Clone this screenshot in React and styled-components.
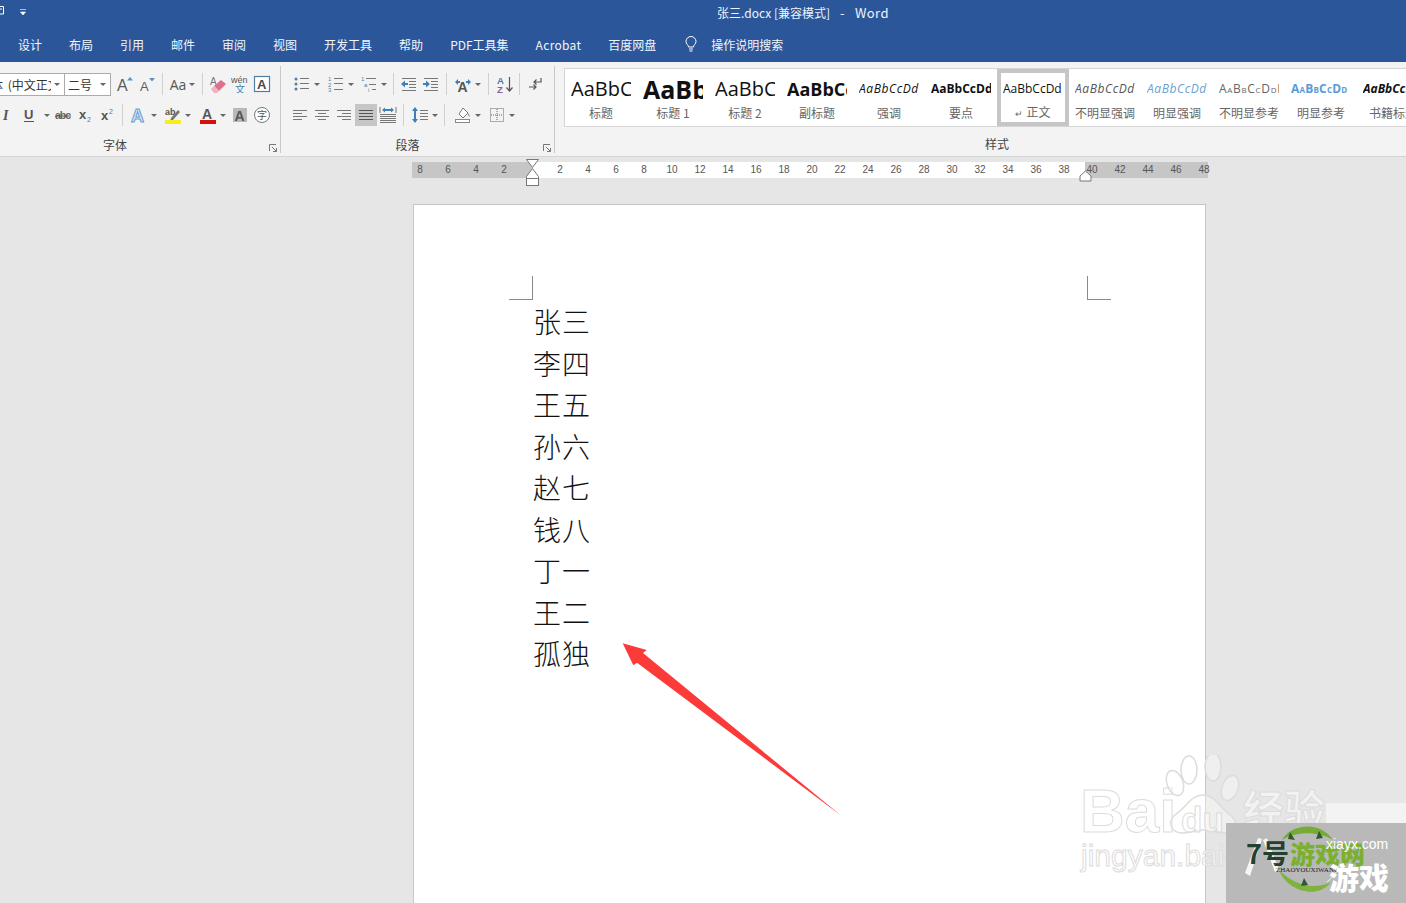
import React from 'react';
import styled, { createGlobalStyle } from 'styled-components';

const CJK = '"Noto Sans CJK SC", sans-serif';
const UI = '"Open Sans", "Noto Sans CJK SC", sans-serif';

const GlobalStyle = createGlobalStyle`
  html, body { margin: 0; padding: 0; background: #e6e6e6; }
  body { font-family: ${CJK}; font-size: 12px; color: #444; }
`;

const NAMES = ['张三', '李四', '王五', '孙六', '赵七', '钱八', '丁一', '王二', '孤独'];
const TABS = ['设计', '布局', '引用', '邮件', '审阅', '视图', '开发工具', '帮助', 'PDF工具集', 'Acrobat', '百度网盘'];
const RULER = [8, 6, 4, 2, ''].concat(Array.from({ length: 24 }, (_, i) => (i + 1) * 2));

const STYLES = [
  { name: '标题', sample: 'AaBbCcDd', size: 20 },
  { name: '标题 1', sample: 'AaBbCcDd', size: 25, bold: true },
  { name: '标题 2', sample: 'AaBbCcDd', size: 20 },
  { name: '副标题', sample: 'AaBbCcDd', size: 18, bold: true },
  { name: '强调', sample: 'AaBbCcDd', italic: true, track: 0.6 },
  { name: '要点', sample: 'AaBbCcDd', bold: true },
  { name: '正文', sample: 'AaBbCcDd', active: true },
  { name: '不明显强调', sample: 'AaBbCcDd', italic: true, color: '#555', track: 0.6 },
  { name: '明显强调', sample: 'AaBbCcDd', italic: true, color: '#6a9fd0', track: 0.6 },
  { name: '不明显参考', sample: 'AaBbCcDdEe', caps: true, color: '#666', track: 0.7 },
  { name: '明显参考', sample: 'AaBbCcDd', caps: true, bold: true, color: '#5b9bd5', track: 0.2 },
  { name: '书籍标题', sample: 'AaBbCcDd', italic: true, bold: true },
];

const Icon = ({ w = 18, h = 18, children }) => (
  <svg width={w} height={h} viewBox={`0 0 ${w} ${h}`} fontFamily="Liberation Sans, sans-serif">
    {children}
  </svg>
);

const Lines = ({ rows, stroke = '#777' }) => (
  <g stroke={stroke} strokeWidth="1" fill="none">
    {rows.map(([x1, x2, y]) => <path key={`${x1}-${y}`} d={`M${x1} ${y}.5H${x2}`} />)}
  </g>
);

const icons = {
  grow: (
    <Icon>
      <text x="1" y="16" fontSize="16" fill="#5c5c5c">A</text>
      <path d="M11 5.500l3-3.500 3 3.500z" fill="#5f93bd" />
    </Icon>
  ),
  shrink: (
    <Icon>
      <text x="2" y="16" fontSize="13" fill="#5c5c5c">A</text>
      <path d="M11 3h6l-3 3.500z" fill="#5f93bd" />
    </Icon>
  ),
  eraser: (
    <Icon>
      <text x="1" y="10" fontSize="10" fill="#777">A</text>
      <path d="M5 11l7-6 5 4-7 7z" fill="#e0708c" />
      <path d="M2 14l3-3 5 5-2 2H5z" fill="#f3b0c0" />
    </Icon>
  ),
  wen: (
    <Icon>
      <text x="0" y="8" fontSize="9" fill="#555">wén</text>
      <text x="4" y="17.500" fontSize="10" fill="#3f7fb5" fontFamily="Noto Sans CJK SC">文</text>
    </Icon>
  ),
  boxA: (
    <Icon>
      <rect x="1.500" y="1.500" width="15" height="15" fill="#fff" stroke="#4f7fa6" strokeWidth="1.200" />
      <text x="4" y="14" fontSize="13" fontWeight="700" fill="#4a4a4a">A</text>
    </Icon>
  ),
  italic: <Icon><text x="6" y="14" fontSize="14" fontWeight="700" fontStyle="italic" fill="#555" fontFamily="Liberation Serif">I</text></Icon>,
  underline: (
    <Icon>
      <text x="4" y="13" fontSize="13" fontWeight="700" fill="#555">U</text>
      <path d="M4 15.500h10" stroke="#555" />
    </Icon>
  ),
  strike: (
    <Icon>
      <text x="1" y="13" fontSize="10.500" fontWeight="700" fill="#666" textLength="16">abc</text>
      <path d="M1 10h16" stroke="#555" />
    </Icon>
  ),
  sub: (
    <Icon>
      <text x="3" y="13" fontSize="13" fontWeight="700" fill="#555">x</text>
      <text x="11" y="16" fontSize="7" fill="#4f7fa6">2</text>
    </Icon>
  ),
  sup: (
    <Icon>
      <text x="3" y="14" fontSize="13" fontWeight="700" fill="#555">x</text>
      <text x="11" y="8" fontSize="7" fill="#4f7fa6">2</text>
    </Icon>
  ),
  effect: <Icon><text x="1" y="16" fontSize="18" fontWeight="700" fill="#d6e6f3" stroke="#6a9fd0" strokeWidth="1">A</text></Icon>,
  highlight: (
    <Icon>
      <text x="1" y="9" fontSize="9" fontWeight="700" fill="#555">ab</text>
      <path d="M7 12l7-8 2 2-7 8-3 1z" fill="#777" />
      <rect x="1" y="14" width="16" height="4" fill="#f7ee1e" />
    </Icon>
  ),
  color: (
    <Icon>
      <text x="3" y="12.500" fontSize="14" fontWeight="700" fill="#555">A</text>
      <rect x="1" y="14" width="16" height="4" fill="#d80f0f" />
    </Icon>
  ),
  shaded: (
    <Icon>
      <rect x="2" y="2" width="14" height="14" fill="#b9b9b9" />
      <text x="3.500" y="14.500" fontSize="14" fontWeight="700" fill="#555">A</text>
    </Icon>
  ),
  circled: (
    <Icon>
      <circle cx="9" cy="9" r="7.500" fill="#fff" stroke="#777" />
      <text x="4" y="13" fontSize="10" fill="#555" fontFamily="Noto Sans CJK SC">字</text>
    </Icon>
  ),
  bullets: (
    <Icon>
      <g fill="#4f7fa6"><circle cx="3" cy="4" r="1.500" /><circle cx="3" cy="9" r="1.500" /><circle cx="3" cy="14" r="1.500" /></g>
      <Lines rows={[[7, 16, 3], [7, 16, 8], [7, 16, 13]]} />
    </Icon>
  ),
  numbers: (
    <Icon>
      <g fontSize="6" fill="#4f7fa6"><text x="1" y="6">1</text><text x="1" y="11.500">2</text><text x="1" y="17">3</text></g>
      <Lines rows={[[7, 16, 3], [7, 16, 8], [7, 16, 14]]} />
    </Icon>
  ),
  multi: (
    <Icon>
      <g fontSize="6" fill="#4f7fa6"><text x="1" y="6">1</text><text x="4" y="11.500">a</text><text x="8" y="17">i</text></g>
      <Lines rows={[[6, 16, 3], [9, 16, 9], [12, 16, 14]]} />
    </Icon>
  ),
  outdent: (
    <Icon>
      <path d="M1 9l4-3.500V8h3v2H5v2.500z" fill="#3f7fb5" />
      <Lines rows={[[2, 16, 3], [9, 16, 6], [9, 16, 9], [9, 16, 12], [2, 16, 15]]} />
    </Icon>
  ),
  indent: (
    <Icon>
      <path d="M8 9L4 5.500V8H1v2h3v2.500z" fill="#3f7fb5" />
      <Lines rows={[[2, 16, 3], [9, 16, 6], [9, 16, 9], [9, 16, 12], [2, 16, 15]]} />
    </Icon>
  ),
  hanzi: (
    <Icon>
      <text x="3.500" y="17" fontSize="14" fontWeight="700" fill="#555">A</text>
      <path d="M1 7l3-3v2h2v2H4v2zM17 7l-3-3v2h-2v2h2v2z" fill="#3f7fb5" />
    </Icon>
  ),
  sort: (
    <Icon>
      <text x="2" y="8.500" fontSize="9.500" fontWeight="700" fill="#3f7fb5">A</text>
      <text x="2" y="17.500" fontSize="9.500" fontWeight="700" fill="#8a5fa8">Z</text>
      <path d="M14.500 2v14M11.500 12.500l3 3.500 3-3.500" stroke="#555" strokeWidth="1.200" fill="none" />
    </Icon>
  ),
  pilcrow: (
    <Icon>
      <path d="M15 3v4H8M10.500 4.500L8 7l2.500 2.500" stroke="#555" strokeWidth="1.200" fill="none" />
      <path d="M3 12h7M7.500 9.500L10 12l-2.500 2.500" stroke="#555" strokeWidth="1.200" fill="none" />
    </Icon>
  ),
  left: <Icon><Lines rows={[[2, 16, 4], [2, 11, 7], [2, 16, 10], [2, 11, 13]]} /></Icon>,
  center: <Icon><Lines rows={[[2, 16, 4], [5, 13, 7], [2, 16, 10], [5, 13, 13]]} /></Icon>,
  right: <Icon><Lines rows={[[2, 16, 4], [7, 16, 7], [2, 16, 10], [7, 16, 13]]} /></Icon>,
  justify: <Icon><Lines stroke="#555" rows={[[2, 16, 4], [2, 16, 7], [2, 16, 10], [2, 16, 13]]} /></Icon>,
  distribute: (
    <Icon>
      <path d="M1 1v6M17 1v6" stroke="#777" fill="none" />
      <path d="M3 4l3-2.500V3h6V1.500L15 4l-3 2.500V5H6v1.500z" fill="#3f7fb5" />
      <Lines rows={[[1, 17, 8], [1, 17, 10], [1, 17, 12], [1, 17, 14], [1, 17, 16]]} />
    </Icon>
  ),
  spacing: (
    <Icon>
      <path d="M4 1l3 4H5v8h2l-3 4-3-4h2V5H1z" fill="#3f7fb5" />
      <Lines rows={[[9, 17, 4], [9, 17, 7], [9, 17, 10], [9, 17, 13]]} />
    </Icon>
  ),
  bucket: (
    <Icon>
      <path d="M5 8l4-6 5 5-5 5z" fill="#fff" stroke="#777" />
      <path d="M14 7c1 1 2 3 1.500 4-.5-.5-1.500-2-1.500-4z" fill="#3f7fb5" />
      <rect x="1.500" y="13.500" width="14" height="3" fill="#fff" stroke="#888" />
    </Icon>
  ),
  borders: (
    <Icon>
      <rect x="2.500" y="2.500" width="13" height="13" fill="none" stroke="#666" strokeDasharray="1 1" />
      <path d="M9 3v12M3 9h12" stroke="#666" strokeDasharray="1 1" />
    </Icon>
  ),
};

const FONT_ROW_TWO = [
  { icon: 'underline', w: 35, caret: true, gap: 6 },
  { icon: 'strike', w: 22 },
  { icon: 'sub', w: 22 },
  { icon: 'sup', w: 22 },
];

const DialogLauncher = () => (
  <Launcher width="8" height="8" viewBox="0 0 8 8">
    <path d="M.5 7V.5H7M3 3l4.500 4.500M7.500 4v3.500H4" stroke="#777" fill="none" />
  </Launcher>
);

const App = () => (
  <Screen>
    <GlobalStyle />
    <TitleBar>
      <QuickAccess>
        <svg width="26" height="16" viewBox="0 0 26 16">
          <path d="M-3 2.500H3.500V10H-3M0 5h2" stroke="#fff" fill="none" />
          <path d="M20 5.500h6M20.500 8h5l-2.500 3z" stroke="#fff" fill="#fff" strokeWidth=".6" />
        </svg>
      </QuickAccess>
      <Title>张三.docx [兼容模式]<TitleApp>-</TitleApp><TitleApp>Word</TitleApp></Title>
    </TitleBar>
    <TabRow>
      {TABS.map((tab) => <Tab key={tab} $track={tab === 'Acrobat' ? 0.3 : 0}>{tab}</Tab>)}
      <SearchBox>
        <svg width="14" height="16" viewBox="0 0 14 16">
          <path d="M4.500 11c0-2-2.500-3-2.500-5.500a5 5 0 0 1 10 0C12 8 9.500 9 9.500 11zM5 13h4M5.500 15h3" stroke="#fff" fill="none" />
        </svg>
        <Tab>操作说明搜索</Tab>
      </SearchBox>
    </TabRow>

    <Ribbon>
      <Group $w={281}>
        <Rows>
          <Row>
            <FontBox>
              <FontName>宋体 (中文正文)</FontName>
              <Caret />
            </FontBox>
            <SizeBox>
              <FontName>二号</FontName>
              <Caret />
            </SizeBox>
            <Tool $w={22} $ml={3}>{icons.grow}</Tool>
            <Tool $w={22}>{icons.shrink}</Tool>
            <Sep />
            <Tool $w={31}><AaLabel>Aa</AaLabel><Caret /></Tool>
            <Sep />
            <Tool $w={22}>{icons.eraser}</Tool>
            <Tool $w={22}>{icons.wen}</Tool>
            <Tool $w={22}>{icons.boxA}</Tool>
          </Row>
          <Row>
            <Tool $w={22} $ml={-5}>{icons.italic}</Tool>
            {FONT_ROW_TWO.map((t) => (
              <Tool key={t.icon} $w={t.w} $gap={t.gap}>{icons[t.icon]}{t.caret && <Caret />}</Tool>
            ))}
            <Sep />
            <Tool $w={33}>{icons.effect}<Caret /></Tool>
            <Tool $w={35}>{icons.highlight}<Caret /></Tool>
            <Tool $w={34}>{icons.color}<Caret /></Tool>
            <Tool $w={22}>{icons.shaded}</Tool>
            <Tool $w={22}>{icons.circled}</Tool>
          </Row>
        </Rows>
        <GroupLabel $shift={50}>字体</GroupLabel>
        <DialogLauncher />
      </Group>

      <Group $w={274}>
        <Rows $pad={8}>
          <Row>
            <Tool $w={34}>{icons.bullets}<Caret /></Tool>
            <Tool $w={34}>{icons.numbers}<Caret /></Tool>
            <Tool $w={32}>{icons.multi}<Caret /></Tool>
            <Sep />
            <Tool $w={22}>{icons.outdent}</Tool>
            <Tool $w={22}>{icons.indent}</Tool>
            <Sep />
            <Tool $w={33}>{icons.hanzi}<Caret /></Tool>
            <Sep />
            <Tool $w={22}>{icons.sort}</Tool>
            <Sep />
            <Tool $w={22}>{icons.pilcrow}</Tool>
          </Row>
          <Row>
            <Tool $w={22}>{icons.left}</Tool>
            <Tool $w={22}>{icons.center}</Tool>
            <Tool $w={22}>{icons.right}</Tool>
            <Tool $w={22} $active>{icons.justify}</Tool>
            <Tool $w={22}>{icons.distribute}</Tool>
            <Sep />
            <Tool $w={32}>{icons.spacing}<Caret /></Tool>
            <Sep />
            <Tool $w={36}>{icons.bucket}<Caret /></Tool>
            <Tool $w={32}>{icons.borders}<Caret /></Tool>
          </Row>
        </Rows>
        <GroupLabel $shift={20}>段落</GroupLabel>
        <DialogLauncher />
      </Group>

      <StylesGroup>
        <Gallery>
          {STYLES.map((s) => (
            <StyleItem key={s.name} $active={s.active}>
              <Sample $size={s.size} $bold={s.bold} $italic={s.italic} $caps={s.caps} $color={s.color} $track={s.track}>
                {s.sample}
              </Sample>
              <StyleName>{s.active && <Mark>↵</Mark>}{s.name}</StyleName>
            </StyleItem>
          ))}
        </Gallery>
        <StylesLabel>样式</StylesLabel>
      </StylesGroup>
    </Ribbon>

    <Workspace>
      <Ruler>
        <RulerNumbers>
          {RULER.map((n, i) => <RulerNumber key={i}>{n}</RulerNumber>)}
        </RulerNumbers>
        <LeftMarker width="15" height="28" viewBox="0 0 15 28">
          <path d="M1.500.500h12L7.500 8.500zM1.500 17.500L7.500 9.500l6 8v2h-12z" fill="#fff" stroke="#777" />
          <rect x="1.500" y="19.500" width="12" height="7" fill="#fff" stroke="#777" />
        </LeftMarker>
        <RightMarker width="13" height="12" viewBox="0 0 13 12">
          <path d="M1 11V6l5.500-5L12 6v5z" fill="#fff" stroke="#777" />
        </RightMarker>
      </Ruler>
      <Page>
        <CropLeft />
        <CropRight />
        {NAMES.map((n) => <NameLine key={n}>{n}</NameLine>)}
      </Page>
    </Workspace>

    <Arrow width="230" height="185" viewBox="0 0 230 185">
      <path d="M2.700 3.300L26.700 10 23 13 221.300 175.700 17 22.700 13.300 25.300z" fill="#fb3a3a" />
    </Arrow>

    <Baidu>
      <BaiduWord>Bai</BaiduWord>
      <Paw width="100" height="90" viewBox="0 0 100 90">
        <g fill="#fff" fillOpacity=".35" stroke="#dcdcdc" strokeWidth="1.500">
          <ellipse cx="19" cy="28" rx="8" ry="13" transform="rotate(-20 19 28)" />
          <ellipse cx="33" cy="15" rx="8" ry="14" />
          <ellipse cx="57" cy="12" rx="8" ry="14" />
          <ellipse cx="74" cy="33" rx="8" ry="13" transform="rotate(20 74 33)" />
          <path d="M47 40c12 0 16 12 26 19 11 8 8 20-6 19-8-1-14-3-20-3s-11 3-20 3c-13 0-16-12-7-19 11-7 15-19 27-19z" />
        </g>
      </Paw>
      <DuWord>du</DuWord>
      <BaiduCn>经验</BaiduCn>
      <BaiduUrl>jingyan.baidu.com</BaiduUrl>
    </Baidu>
    <LightBand />
    <GameMark>
      <Globe width="76" height="76" viewBox="0 0 76 76">
        <path d="M-11 18L-7 19-19 56-24 53zM-6 20L-2 18 10 50 6 52z" fill="#f5f5f5" />
        <path d="M13 20C22 3 52 1 64 20 50 11 27 11 13 20z" fill="#76ab35" />
        <path d="M10 50c6 16 26 26 42 20 4-2 8-5 10-8-16 8-36 4-52-12z" fill="#7fb23f" />
        <path d="M58 62c6-5 10-10 12-16" stroke="#f5f5f5" strokeWidth="1" fill="none" />
        <path d="M21 12l5 8-7-1zM50 11l-3 8 7-1zM32 66l3-8 4 7z" fill="#2f5a33" />
      </Globe>
      <SevenHao>7号</SevenHao>
      <GreenWord>游戏网</GreenWord>
      <SiteWord>xiayx.com</SiteWord>
      <TinyWord>ZHAOYOUXIWANG</TinyWord>
      <WhiteWord>游戏</WhiteWord>
    </GameMark>
  </Screen>
);

const Screen = styled.div`
  position: relative;
  width: 1406px;
  height: 903px;
  overflow: hidden;
  background: #e6e6e6;
`;

const TitleBar = styled.div`
  display: flex;
  align-items: center;
  height: 24px;
  background: #2b579a;
`;

const QuickAccess = styled.div`
  display: flex;
  width: 717px;
`;

const Title = styled.div`
  color: #f0f4fa;
  font-size: 12px;
  white-space: nowrap;
`;

const TitleApp = styled.span`
  margin-left: 10px;
  font-size: 13px;
  letter-spacing: 0.4px;
`;

const TabRow = styled.div`
  display: flex;
  align-items: center;
  gap: 27px;
  box-sizing: border-box;
  height: 38px;
  padding: 2px 0 0 18px;
  background: #2b579a;
`;

const Tab = styled.span`
  color: #f2f5fa;
  font-size: 12px;
  letter-spacing: ${(p) => p.$track || 0}px;
  white-space: nowrap;
`;

const SearchBox = styled.div`
  display: flex;
  align-items: center;
  gap: 13px;
  margin-left: 1px;
`;

const Ribbon = styled.div`
  display: flex;
  height: 94px;
  background: #f3f3f3;
  border-bottom: 1px solid #d4d4d4;
  overflow: hidden;
`;

const Group = styled.div`
  position: relative;
  flex: none;
  display: flex;
  flex-direction: column;
  width: ${(p) => p.$w}px;
  height: 87px;
  margin-top: 4px;
  box-sizing: border-box;
  border-right: 1px solid #c8c8c8;
`;

const Rows = styled.div`
  display: flex;
  flex-direction: column;
  gap: 9px;
  padding: 7px 0 0 ${(p) => p.$pad || 0}px;
`;

const Row = styled.div`
  display: flex;
  align-items: center;
  height: 22px;
`;

const Tool = styled.div`
  flex: none;
  display: flex;
  align-items: center;
  justify-content: center;
  gap: ${(p) => p.$gap || 3}px;
  width: ${(p) => p.$w}px;
  height: 22px;
  margin-left: ${(p) => p.$ml || 0}px;
  background: ${(p) => (p.$active ? '#c6c6c6' : 'transparent')};
`;

const Caret = styled.span`
  flex: none;
  width: 0;
  height: 0;
  border-left: 3.5px solid transparent;
  border-right: 3.5px solid transparent;
  border-top: 3.5px solid #666;
`;

const Sep = styled.span`
  flex: none;
  width: 1px;
  height: 22px;
  margin: 0 4px;
  background: #d0d0d0;
`;

const FontBox = styled.div`
  flex: none;
  display: flex;
  align-items: center;
  justify-content: space-between;
  box-sizing: border-box;
  width: 90px;
  height: 23px;
  margin-left: -25px;
  padding: 0 4px 0 3px;
  background: #fff;
  border: 1px solid #ababab;
`;

const SizeBox = styled(FontBox)`
  width: 47px;
  margin-left: -1px;
`;

const FontName = styled.span`
  display: block;
  flex: 1;
  min-width: 0;
  margin-right: 3px;
  overflow: hidden;
  white-space: nowrap;
  word-spacing: 2px;
  font-size: 12px;
  color: #333;
`;

const AaLabel = styled.span`
  font-family: ${UI};
  font-size: 14px;
  color: #555;
`;

const GroupLabel = styled.div`
  margin-top: 10px;
  padding-right: ${(p) => p.$shift}px;
  line-height: 18px;
  text-align: center;
  font-size: 12px;
  color: #444;
`;

const Launcher = styled.svg`
  position: absolute;
  right: 3px;
  bottom: 1px;
`;

const StylesGroup = styled.div`
  flex: 1;
  min-width: 0;
  display: flex;
  flex-direction: column;
  padding: 6px 0 0 9px;
`;

const Gallery = styled.div`
  display: flex;
  height: 57px;
  width: 900px;
  background: #fff;
  border: 1px solid #d5d5d5;
`;

const StyleItem = styled.div`
  flex: none;
  display: flex;
  flex-direction: column;
  align-items: center;
  box-sizing: border-box;
  width: 72px;
  height: 57px;
  padding-top: ${(p) => (p.$active ? 3 : 7)}px;
  border: ${(p) => (p.$active ? '4px solid #c6c6c6' : 'none')};
`;

const Sample = styled.div`
  width: 60px;
  height: 26px;
  line-height: 26px;
  overflow: hidden;
  white-space: nowrap;
  text-align: left;
  font-family: ${UI};
  font-size: ${(p) => p.$size || 12}px;
  font-weight: ${(p) => (p.$bold ? 700 : 400)};
  font-style: ${(p) => (p.$italic ? 'italic' : 'normal')};
  font-variant: ${(p) => (p.$caps ? 'small-caps' : 'normal')};
  letter-spacing: ${(p) => p.$track || 0}px;
  color: ${(p) => p.$color || '#111'};
`;

const StyleName = styled.div`
  margin-top: 3px;
  font-size: 12px;
  line-height: 16px;
  white-space: nowrap;
  color: #666;
`;

const Mark = styled.span`
  margin-right: 3px;
  font-size: 9px;
`;

const StylesLabel = styled.div`
  margin-top: 8px;
  padding-left: 421px;
  line-height: 18px;
  font-size: 12px;
  color: #444;
`;

const Workspace = styled.div`
  padding-top: 5px;
`;

const Ruler = styled.div`
  position: relative;
  width: 796px;
  height: 16px;
  margin-left: 412px;
  background: linear-gradient(to right, #c6c6c6 120px, #fff 120px, #fff 673px, #c6c6c6 673px);
`;

const RulerNumbers = styled.div`
  display: flex;
  margin-left: -6px;
`;

const RulerNumber = styled.span`
  flex: none;
  width: 28px;
  text-align: center;
  line-height: 16px;
  font-family: "Liberation Sans", sans-serif;
  font-size: 10px;
  color: #555;
`;

const LeftMarker = styled.svg`
  position: absolute;
  left: 113px;
  top: -3px;
`;

const RightMarker = styled.svg`
  position: absolute;
  left: 667px;
  top: 8px;
`;

const Page = styled.div`
  position: relative;
  box-sizing: border-box;
  width: 793px;
  height: 720px;
  margin: 26px 0 0 413px;
  padding: 96px 0 0 119px;
  background: #fff;
  border: 1px solid #c6c6c6;
`;

const CropLeft = styled.span`
  position: absolute;
  left: 95px;
  top: 71px;
  width: 23px;
  height: 23px;
  border-right: 1px solid #8a8a8a;
  border-bottom: 1px solid #8a8a8a;
`;

const CropRight = styled.span`
  position: absolute;
  left: 673px;
  top: 71px;
  width: 23px;
  height: 23px;
  border-left: 1px solid #8a8a8a;
  border-bottom: 1px solid #8a8a8a;
`;

const NameLine = styled.div`
  height: 41.5px;
  line-height: 41.5px;
  font-family: ${CJK};
  font-size: 28px;
  font-weight: 300;
  letter-spacing: 1px;
  color: #111;
`;

const Arrow = styled.svg`
  position: absolute;
  left: 620px;
  top: 640px;
`;

const Baidu = styled.div`
  position: absolute;
  left: 1078px;
  top: 750px;
  width: 328px;
  height: 130px;
`;

const outlined = `
  position: absolute;
  font-family: "Liberation Sans", sans-serif;
  color: rgba(255, 255, 255, 0.5);
  -webkit-text-stroke: 1px #dcdcdc;
  white-space: nowrap;
`;

const BaiduWord = styled.span`
  ${outlined}
  left: 2px;
  top: 28px;
  font-size: 62px;
  line-height: 66px;
  font-weight: 700;
`;

const Paw = styled.svg`
  position: absolute;
  left: 78px;
  top: 5px;
`;

const DuWord = styled.span`
  ${outlined}
  left: 103px;
  top: 50px;
  font-size: 35px;
  line-height: 40px;
  font-weight: 700;
`;

const BaiduCn = styled.span`
  ${outlined}
  left: 165px;
  top: 29px;
  font-family: ${CJK};
  font-size: 41px;
  line-height: 56px;
  font-weight: 700;
`;

const BaiduUrl = styled.span`
  ${outlined}
  left: 3px;
  top: 88px;
  font-size: 30px;
  line-height: 36px;
`;

const LightBand = styled.div`
  position: absolute;
  left: 1326px;
  top: 803px;
  width: 80px;
  height: 20px;
  background: #f3f3f3;
`;

const GameMark = styled.div`
  position: absolute;
  left: 1226px;
  top: 823px;
  width: 180px;
  height: 80px;
  background: #b9b9b9;
`;

const Globe = styled.svg`
  position: absolute;
  left: 43px;
  top: -3px;
  overflow: visible;
`;

const SevenHao = styled.span`
  position: absolute;
  left: 20px;
  top: 12px;
  font-family: ${CJK};
  font-size: 27px;
  line-height: 36px;
  font-weight: 700;
  color: #24402f;
`;

const GreenWord = styled.span`
  position: absolute;
  left: 64px;
  top: 14px;
  font-family: ${CJK};
  font-size: 25px;
  line-height: 32px;
  font-weight: 900;
  color: #7bb02f;
  white-space: nowrap;
`;

const SiteWord = styled.span`
  position: absolute;
  left: 100px;
  top: 12px;
  font-family: "Liberation Sans", sans-serif;
  font-size: 14px;
  line-height: 18px;
  color: #fff;
`;

const TinyWord = styled.span`
  position: absolute;
  left: 50px;
  top: 43px;
  font-family: "Liberation Serif", serif;
  font-size: 7px;
  line-height: 8px;
  color: #222;
`;

const WhiteWord = styled.span`
  position: absolute;
  left: 103px;
  top: 34px;
  font-family: ${CJK};
  font-size: 30px;
  line-height: 38px;
  font-weight: 900;
  color: #fff;
  white-space: nowrap;
`;

export default App;
